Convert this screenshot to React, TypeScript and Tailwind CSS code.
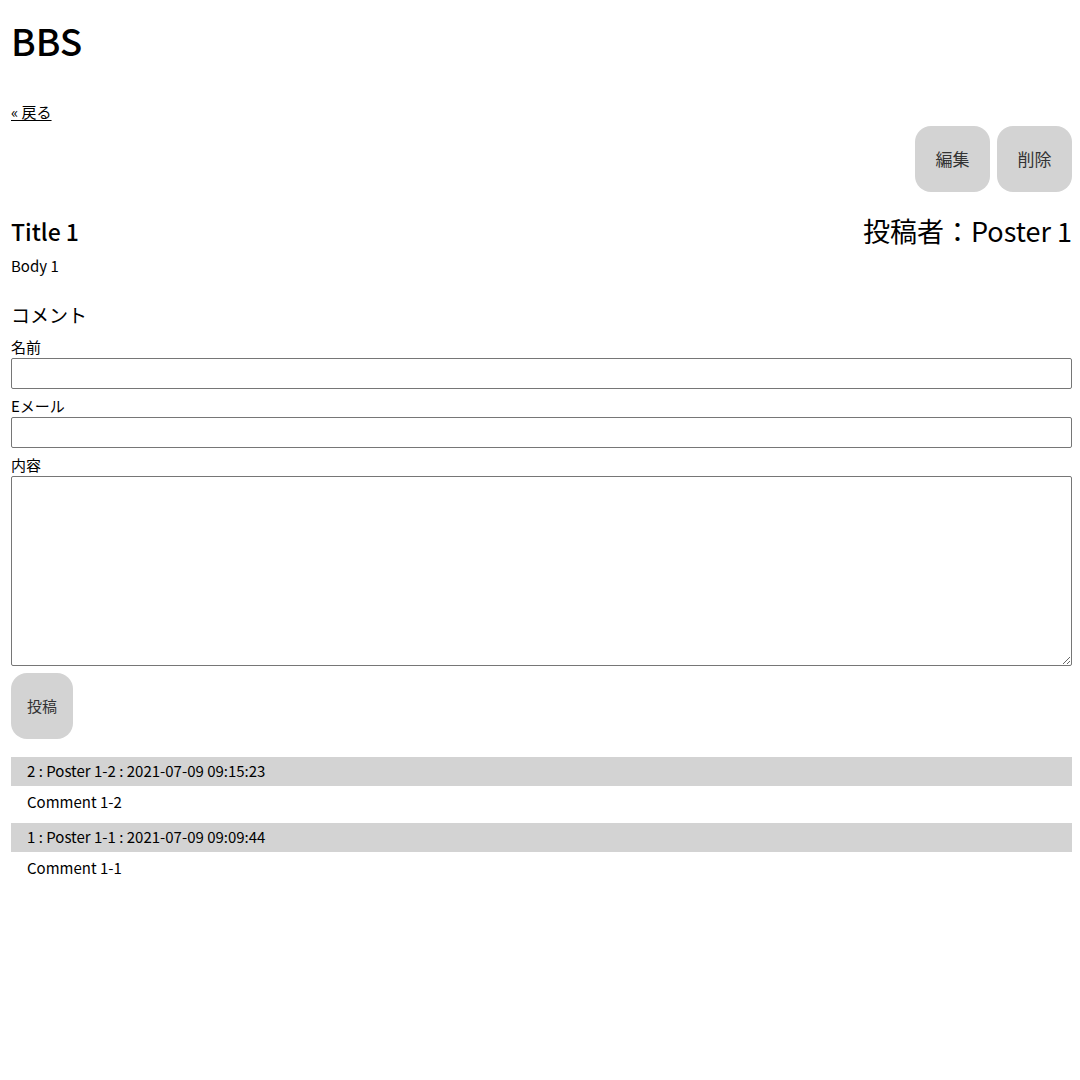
export default function App() {
  const comments = [
    { no: 2, name: "Poster 1-2", date: "2021-07-09 09:15:23", body: "Comment 1-2" },
    { no: 1, name: "Poster 1-1", date: "2021-07-09 09:09:44", body: "Comment 1-1" },
  ];

  return (
    <main className="w-[1080px] h-[1080px] bg-white pl-[11px] pr-[8px] pt-[14px] text-black font-['Noto_Sans_CJK_JP',sans-serif] overflow-hidden">
      <h1 className="text-[37px] leading-[52px] font-medium">BBS</h1>
      <div className="mt-[33px]">
        <a href="#" className="text-[15px] leading-[20px] underline underline-offset-2">« 戻る</a>
      </div>
      <div className="flex justify-end gap-[7px] mt-[3px]">
        <button className="w-[75px] h-[66px] rounded-[16px] bg-[#d3d3d3] text-[17px] text-[#333]">編集</button>
        <button className="w-[75px] h-[66px] rounded-[16px] bg-[#d3d3d3] text-[17px] text-[#333]">削除</button>
      </div>
      <div className="flex items-center justify-between mt-[16px] h-[46px]">
        <h2 className="text-[23px] font-medium">Title 1</h2>
        <div className="text-[27px]">投稿者：Poster 1</div>
      </div>
      <p className="text-[15px] leading-[20px] mt-[2px]">Body 1</p>
      <section className="mt-[26px]">
        <h3 className="text-[19px] leading-[26px]">コメント</h3>
        <label className="block text-[15px] leading-[23px] mt-[7px]">名前</label>
        <input className="block w-full h-[31px] border border-[#767676] rounded-[2px]" />
        <label className="block text-[15px] leading-[23px] mt-[5px]">Eメール</label>
        <input className="block w-full h-[31px] border border-[#767676] rounded-[2px]" />
        <label className="block text-[15px] leading-[23px] mt-[5px]">内容</label>
        <textarea className="block w-full h-[190px] border border-[#767676] rounded-[2px]" />
        <button className="mt-[7px] w-[62px] h-[66px] rounded-[16px] bg-[#d3d3d3] text-[15px] text-[#333]">投稿</button>
      </section>
      <ul className="mt-[18px] flex flex-col gap-[5px]">
        {comments.map((c) => (
          <li key={c.no}>
            <div className="bg-[#d3d3d3] h-[29px] flex items-center px-[16px] text-[15px]">
              {c.no} : {c.name} : {c.date}
            </div>
            <div className="px-[16px] text-[15px] leading-[32px]">{c.body}</div>
          </li>
        ))}
      </ul>
    </main>
  );
}
